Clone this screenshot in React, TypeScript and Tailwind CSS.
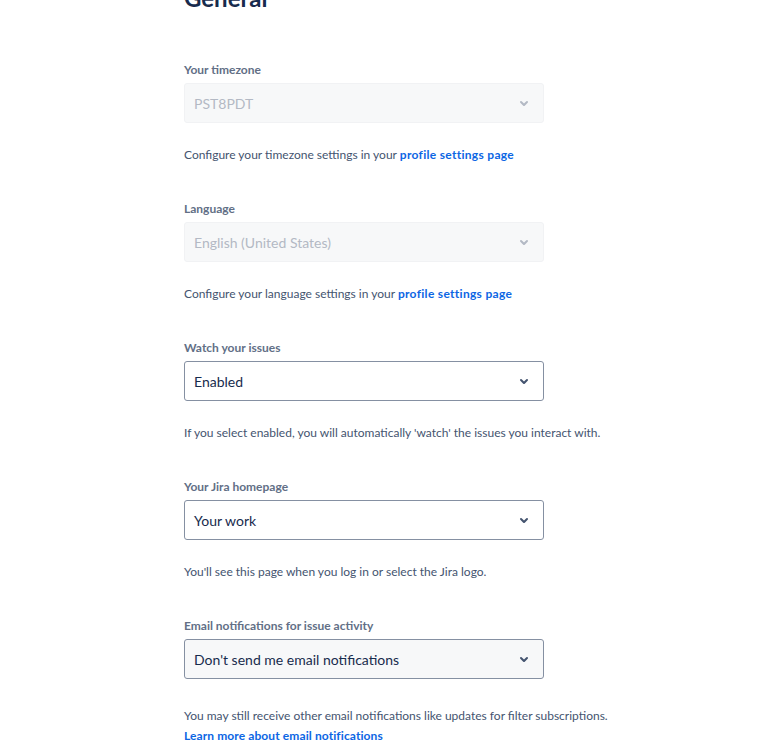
type FieldProps = {
  label: string;
  value: string;
  disabled?: boolean;
  hovered?: boolean;
  children: React.ReactNode;
  helpClass?: string;
};

// Atlassian-style small filled chevron
const Chevron = ({ className }: { className: string }) => (
  <svg width="24" height="24" viewBox="0 0 24 24" className={className}>
    <path
      fill="currentColor"
      d="M8.292 10.293a1.009 1.009 0 000 1.419l2.939 2.965c.218.215.5.322.779.322s.556-.107.769-.322l2.93-2.955a1.01 1.01 0 000-1.419.987.987 0 00-1.406 0l-2.298 2.317-2.307-2.327a.99.99 0 00-1.406 0z"
    />
  </svg>
);

const Field = ({ label, value, disabled, hovered, children, helpClass }: FieldProps) => (
  <div className="flex flex-col">
    <label className="text-[12px] leading-[16px] font-bold text-[#626f86]">{label}</label>
    <div
      className={
        disabled
          ? "mt-[5px] flex h-[40px] w-[360px] items-center justify-between rounded-[3px] border border-[#f1f2f4] bg-[#f7f8f9] pl-[9px] pr-[7px]"
          : hovered
          ? "mt-[5px] flex h-[40px] w-[360px] items-center justify-between rounded-[3px] border border-[#8590a2] bg-[#f7f8f9] pl-[9px] pr-[7px]"
          : "mt-[5px] flex h-[40px] w-[360px] items-center justify-between rounded-[3px] border border-[#8590a2] bg-white pl-[9px] pr-[7px]"
      }
    >
      <span className={disabled ? "text-[14px] text-[#b3b9c4]" : "text-[14px] text-[#172b4d]"}>{value}</span>
      <Chevron className={disabled ? "text-[#b3b9c4]" : "text-[#44546f]"} />
    </div>
    <div className={helpClass ?? "mt-[22px] text-[12px] leading-[20px] text-[#44546f]"}>{children}</div>
  </div>
);

export default function App() {
  return (
    <div
      className="h-[743px] w-[757px] overflow-hidden bg-white"
      style={{ fontFamily: '"Segoe UI", Lato, "Noto Sans", sans-serif' }}
    >
      <div className="-mt-[16px] pl-[184px]">
        <h1 className="text-[24px] leading-[28px] font-bold text-[#172b4d]">General</h1>
        <div className="mt-[50px] flex flex-col gap-[36px]">
          <Field label="Your timezone" value="PST8PDT" disabled>
            Configure your timezone settings in your{" "}
            <a className="font-bold tracking-[0.3px] text-[#0c66e4]">profile settings page</a>
          </Field>
          <Field label="Language" value="English (United States)" disabled>
            Configure your language settings in your{" "}
            <a className="font-bold tracking-[0.3px] text-[#0c66e4]">profile settings page</a>
          </Field>
          <Field label="Watch your issues" value="Enabled">
            If you select enabled, you will automatically 'watch' the issues you interact with.
          </Field>
          <Field label="Your Jira homepage" value="Your work">
            You'll see this page when you log in or select the Jira logo.
          </Field>
          <Field
            label="Email notifications for issue activity"
            value="Don't send me email notifications"
            hovered
            helpClass="mt-[27px] text-[12px] leading-[20px] text-[#44546f]"
          >
            You may still receive other email notifications like updates for filter subscriptions.
            <br />
            <a className="font-bold tracking-[0.1px] text-[#0c66e4]">Learn more about email notifications</a>
          </Field>
        </div>
      </div>
    </div>
  );
}
